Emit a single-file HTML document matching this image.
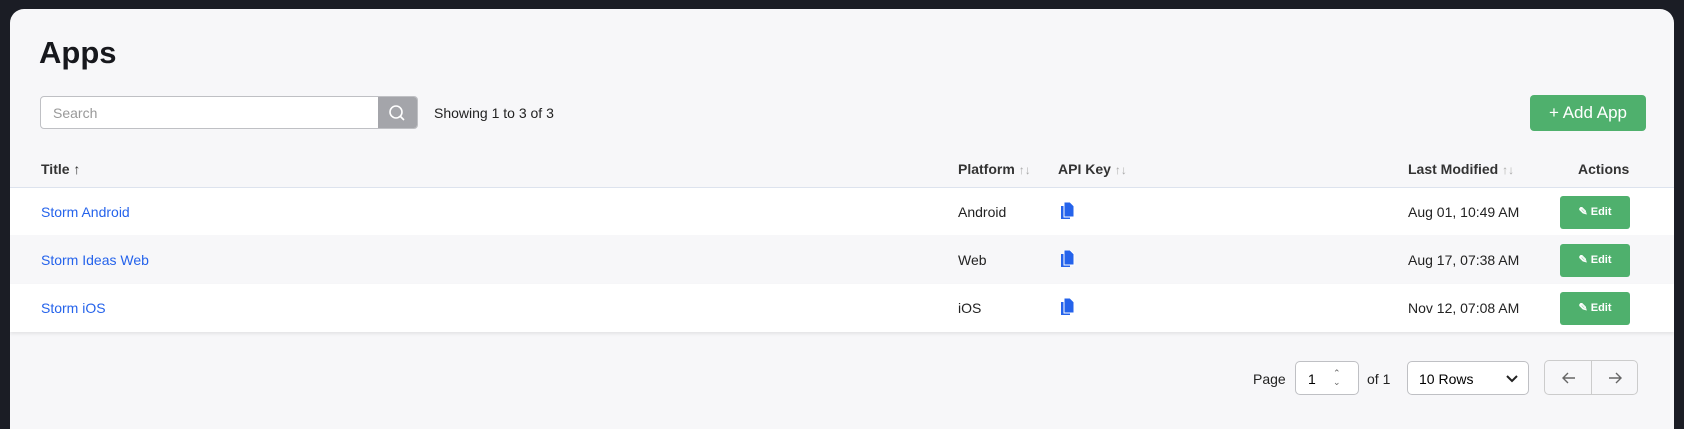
<!DOCTYPE html>
<html><head><style>
*{box-sizing:border-box;margin:0;padding:0}
body{width:1684px;height:419px;background:#1b1d25;font-family:"Liberation Sans",sans-serif;position:relative;overflow:hidden}
.card{position:absolute;left:10px;top:9px;width:1664px;height:420px;background:#f7f7f9;border-radius:14px 14px 0 0;overflow:hidden}
.a{position:absolute}
h1{position:absolute;left:29px;top:26px;font-size:31px;font-weight:bold;color:#17181d}
.search{left:30px;top:87px;width:378px;height:33px;border:1px solid #bfc0c4;border-radius:4px;background:#fff;overflow:hidden}
.search span{position:absolute;left:12px;top:8px;font-size:14px;color:#999}
.search .btn{position:absolute;right:0;top:0;width:39px;height:33px;background:#a4a5aa}
.txt{font-size:14px;color:#222}
.th{font-size:14px;font-weight:bold;color:#333}
.th i{font-style:normal;color:#aaa;font-weight:normal;font-size:12px}
.row{position:absolute;left:0;width:1664px;height:48px}
.link{color:#2563eb;font-size:14px}
.edit{position:absolute;left:1550px;width:70px;height:33px;background:#4fb06d;border-radius:3px;color:#fff;font-size:11px;font-weight:bold;text-align:center;line-height:33px}
.add{left:1520px;top:86px;width:116px;height:36px;background:#4fb06d;border-radius:4px;color:#fff;font-size:17px;text-align:center;line-height:36px}
.box{border:1px solid #bfc0c4;border-radius:5px;background:#fff}
</style></head><body>
<div class="card">
<h1>Apps</h1>
<div class="a search"><span>Search</span><div class="btn">
<svg width="39" height="33"><circle cx="18" cy="15" r="6" fill="none" stroke="#fff" stroke-width="1.6"/><line x1="22.5" y1="19.5" x2="26" y2="23" stroke="#fff" stroke-width="1.6"/></svg></div></div>
<div class="a txt" style="left:424px;top:96px">Showing 1 to 3 of 3</div>
<div class="a add">+ Add App</div>
<div class="a th" style="left:31px;top:152px">Title ↑</div>
<div class="a th" style="left:948px;top:152px">Platform <i>↑↓</i></div>
<div class="a th" style="left:1048px;top:152px">API Key <i>↑↓</i></div>
<div class="a th" style="left:1398px;top:152px">Last Modified <i>↑↓</i></div>
<div class="a th" style="left:1568px;top:152px">Actions</div>
<div class="row" style="top:178px;background:#fff;border-top:1px solid #dde3ee"></div>
<div class="row" style="top:227px;background:#f7f7f9"></div>
<div class="row" style="top:275px;background:#fff;box-shadow:0 2px 3px rgba(0,0,0,.08)"></div>

<div class="a link" style="left:31px;top:195px">Storm Android</div>
<div class="a txt" style="left:948px;top:195px">Android</div>
<div class="a link" style="left:31px;top:243px">Storm Ideas Web</div>
<div class="a txt" style="left:948px;top:243px">Web</div>
<div class="a link" style="left:31px;top:291px">Storm iOS</div>
<div class="a txt" style="left:948px;top:291px">iOS</div>
<div class="a txt" style="left:1398px;top:195px">Aug 01, 10:49 AM</div>
<div class="a txt" style="left:1398px;top:243px">Aug 17, 07:38 AM</div>
<div class="a txt" style="left:1398px;top:291px">Nov 12, 07:08 AM</div>

<svg class="a" style="left:1051px;top:193px" width="14" height="18"><rect x="0" y="4" width="9" height="13" fill="#2563eb"/><path d="M3 0h6l4 4v11H3z" fill="#2563eb" stroke="#fff" stroke-width="1"/></svg>
<svg class="a" style="left:1051px;top:241px" width="14" height="18"><rect x="0" y="4" width="9" height="13" fill="#2563eb"/><path d="M3 0h6l4 4v11H3z" fill="#2563eb" stroke="#fff" stroke-width="1"/></svg>
<svg class="a" style="left:1051px;top:289px" width="14" height="18"><rect x="0" y="4" width="9" height="13" fill="#2563eb"/><path d="M3 0h6l4 4v11H3z" fill="#2563eb" stroke="#fff" stroke-width="1"/></svg>

<div class="edit" style="top:187px">✎ Edit</div>
<div class="edit" style="top:235px">✎ Edit</div>
<div class="edit" style="top:283px">✎ Edit</div>

<div class="a txt" style="left:1243px;top:362px">Page</div>
<div class="a box" style="left:1285px;top:352px;width:64px;height:34px"><span style="position:absolute;left:12px;top:9px;font-size:14px">1</span><span style="position:absolute;left:37px;top:7px;font-size:9px;color:#666;line-height:9px">⌃<br>⌄</span></div>
<div class="a txt" style="left:1357px;top:362px">of 1</div>
<div class="a box" style="left:1397px;top:352px;width:122px;height:34px"><span style="position:absolute;left:11px;top:9px;font-size:14px">10 Rows</span>
<svg style="position:absolute;right:10px;top:12px" width="12" height="10"><path d="M1 2l5 5 5-5" fill="none" stroke="#222" stroke-width="2"/></svg></div>
<div class="a" style="left:1534px;top:351px;width:94px;height:35px;border:1px solid #ccc;border-radius:5px;background:#f7f7f9">
<div style="position:absolute;left:46px;top:0;width:1px;height:33px;background:#ccc"></div>
<svg style="position:absolute;left:16px;top:10px" width="16" height="14"><path d="M14 7H2M7 2L2 7l5 5" fill="none" stroke="#666" stroke-width="1.4"/></svg>
<svg style="position:absolute;left:62px;top:10px" width="16" height="14"><path d="M2 7h12M9 2l5 5-5 5" fill="none" stroke="#666" stroke-width="1.4"/></svg>
</div>
</div>
</body></html>
